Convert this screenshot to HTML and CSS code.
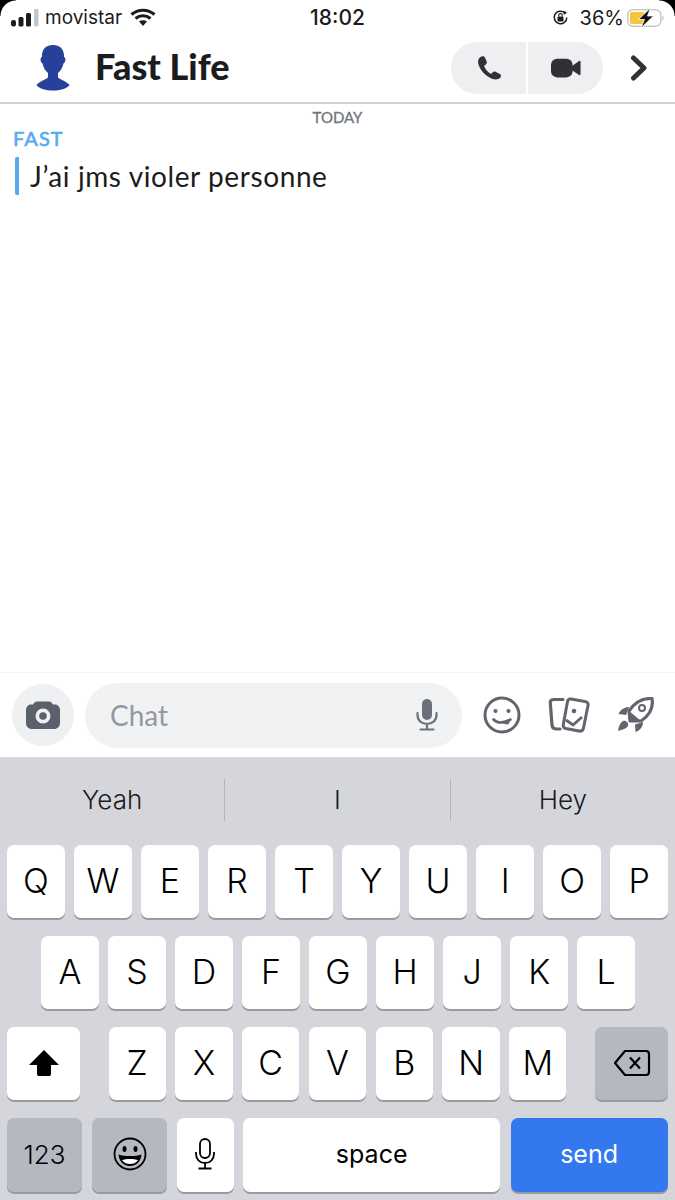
FILE: index.html
```html
<!DOCTYPE html>
<html lang="en">
<head>
    <meta charset="UTF-8">
    <meta name="viewport" content="width=device-width, initial-scale=1.0">
    <title>Fast Life</title>
    <link rel="stylesheet" href="styles.css">
</head>
<body>
    <div class="phone">
        <!-- status bar -->
        <div class="status">
            <div class="status-left">
                <svg class="signal" width="28" height="18" viewBox="0 0 28 18"><rect x="0" y="11" width="5" height="6.500" rx="2.200" fill="#1a1c20"/><rect x="7.500" y="8" width="5" height="9.500" rx="1.500" fill="#1a1c20"/><rect x="15" y="4" width="5" height="13.500" rx="1.500" fill="#1a1c20"/><rect x="23" y="0" width="4.500" height="17.500" rx="1.400" fill="#c5c6c9"/></svg>
                <span class="carrier">movistar</span>
                <svg class="wifi" width="26" height="19" viewBox="0 0 26 19"><path d="M1.500 6.500C8 .8 18 .8 24.500 6.500M5.500 10.500C10 6.800 16 6.800 20.500 10.500" fill="none" stroke="#1a1c20" stroke-width="3.200"/><path d="M9 13.500C11.300 11.800 14.700 11.800 17 13.500L13 18Z" fill="#1a1c20"/></svg>
            </div>
            <div class="status-time">18:02</div>
            <div class="status-right">
                <svg class="lock" width="17" height="17" viewBox="0 0 17 17"><path d="M14.800 8.500A6.300 6.300 0 1 1 12.500 3.600" fill="none" stroke="#1a1c20" stroke-width="1.500"/><path d="M11.500 1.500L15 3.800 11.800 6Z" fill="#1a1c20"/><rect x="5.500" y="7.500" width="6" height="5" rx="1" fill="#1a1c20"/><path d="M6.800 7.500V6.300a1.700 1.700 0 0 1 3.400 0V7.500" fill="none" stroke="#1a1c20" stroke-width="1.100"/></svg>
                <span class="percent">36%</span>
                <svg class="battery" width="38" height="20" viewBox="0 0 38 20"><rect x=".8" y="1.800" width="33" height="16.400" rx="5" fill="none" stroke="#c9c9c9" stroke-width="1.500"/><rect x="3" y="4" width="15" height="12" rx="2" fill="#f5c63c"/><path d="M35.500 7.500c1.500.5 1.500 4.500 0 5z" fill="#bdbdbd"/><path d="M23.500 0L11.500 11.500H17.500L14 20 26.500 8H20.500Z" fill="#111" stroke="#fff" stroke-width=".8"/></svg>
            </div>
        </div>

        <!-- header -->
        <div class="header">
            <svg class="avatar" width="34" height="46" viewBox="0 0 34 46"><path d="M17 0C9 0 5.500 5.500 6 12 4 12.500 4 17 6.500 18.500 7.500 23 9.500 26 12 28V32C12 34 5 35 .5 40 3.500 44 10 45.500 17 45.500S30.500 44 33.500 40C29 35 22 34 22 32V28C24.500 26 26.500 23 27.500 18.500 30 17 30 12.500 28 12 28.500 5.500 25 0 17 0Z" fill="#27409a"/></svg>
            <h1 class="name">Fast Life</h1>
            <div class="call-pill">
                <div class="call-btn">
                    <svg width="28" height="28" viewBox="0 0 28 28"><path d="M5 3.500C3 5 2.500 7.500 3.500 10.500 5.500 16.500 10.500 22 17.500 25 20.500 26 24 25.500 25.500 23.500 26.500 22 26 20.500 24.500 19.800L21 18C19.500 17.300 18.500 17.500 17.500 18.500L16 20C13 18.500 10.500 15.500 9 12L10.800 10.500C11.800 9.500 12 8.500 11.500 7L10 3.800C9 1.800 6.800 2 5 3.500Z" fill="#2f3136"/></svg>
                </div>
                <div class="call-btn">
                    <svg width="30" height="20" viewBox="0 0 32 20"><rect x="0" y="0" width="23" height="20" rx="6.500" fill="#2f3136"/><path d="M22 8L30 2.500C31 2 31.500 2.500 31.500 3.500V16.500C31.500 17.500 31 18 30 17.500L22 12Z" fill="#2f3136"/></svg>
                </div>
            </div>
            <svg class="chevron" width="18" height="26" viewBox="0 0 18 26"><path d="M3.500 3L14 13 3.500 23" fill="none" stroke="#2f3136" stroke-width="5" stroke-linecap="round" stroke-linejoin="round"/></svg>
        </div>

        <!-- messages -->
        <div class="messages">
            <div class="day">TODAY</div>
            <div class="sender">FAST</div>
            <div class="message">J’ai jms violer personne</div>
        </div>

        <!-- chat bar -->
        <div class="chat-bar">
            <div class="camera">
                <svg width="36" height="30" viewBox="0 0 36 30"><path d="M12 1.500H24C26 1.500 27 3 28 4.500H30C33 4.500 35 7 35 10V23C35 26.500 32.500 29 29 29H7C3.500 29 1 26.500 1 23V10C1 7 3 4.500 6 4.500H8C9 3 10 1.500 12 1.500Z" fill="#5b616c"/><circle cx="18" cy="16" r="7.500" fill="#f0f1f3"/><circle cx="18" cy="16" r="3.800" fill="#5b616c"/></svg>
            </div>
            <div class="chat-input">
                <span class="placeholder">Chat</span>
                <svg width="22" height="32" viewBox="0 0 22 32"><rect x="6" y="0" width="10" height="21" rx="5" fill="#6d7079"/><path d="M1.500 14V16C1.500 21.500 5.500 25 11 25S20.500 21.500 20.500 16V14M11 25V30M4.500 30.500H17.500" fill="none" stroke="#6d7079" stroke-width="2.200" stroke-linecap="round"/></svg>
            </div>
            <div class="chat-icons">
                <svg width="38" height="38" viewBox="0 0 38 38"><circle cx="19" cy="19" r="17" fill="none" stroke="#62656e" stroke-width="3"/><circle cx="12.500" cy="15" r="2.100" fill="#62656e"/><circle cx="25.500" cy="15" r="2.100" fill="#62656e"/><path d="M10.500 23.500C14 27 20 27.500 27.500 23.500M22 25.500C22.500 28 25 28 25.500 25" fill="none" stroke="#62656e" stroke-width="2.600" stroke-linecap="round"/></svg>
                <svg width="42" height="36" viewBox="0 0 42 36"><path d="M15 2.500H6C3.500 2.500 2 3.500 2.300 6L4 28C4.300 31 6 32 8.500 32H12" fill="none" stroke="#62656e" stroke-width="3.200" stroke-linecap="round"/><path d="M23 2L37 4.500C39.500 5 40.500 6.500 40 8.500L35.500 31C35 33.500 33.500 34.500 31 34L18 31.500C16 31 15 29.500 15.300 27.500L19.500 4.500C20 2.500 21 1.600 23 2Z" fill="none" stroke="#62656e" stroke-width="3"/><circle cx="26" cy="14" r="2.300" fill="#62656e"/><path d="M18 23L25 28 34 20" fill="none" stroke="#62656e" stroke-width="2.800"/></svg>
                <svg width="38" height="36" viewBox="0 0 38 36"><path d="M12 14C18 5 26 1 35 1.500 36.500 10 33 18 24 24L13 24Z" fill="none" stroke="#62656e" stroke-width="3.200" stroke-linejoin="round"/><circle cx="25" cy="11" r="3" fill="none" stroke="#62656e" stroke-width="2"/><path d="M12 10C8 10 4 12 1.500 17L9 18ZM26 25C26 29 24 33 18.500 35L18 27.500ZM6 24C9 23 12 26 11 29 9 32 4 33 1 34 1.500 31 2.500 26 6 24Z" fill="#62656e"/><path d="M13 24L12 14 24 24Z" fill="#62656e"/></svg>
            </div>
        </div>

        <!-- keyboard -->
        <div class="keyboard">
            <div class="suggestions">
                <div class="suggestion">Yeah</div>
                <div class="suggestion">I</div>
                <div class="suggestion">Hey</div>
            </div>
            <div class="row">
                <div class="key">Q</div><div class="key">W</div><div class="key">E</div><div class="key">R</div><div class="key">T</div><div class="key">Y</div><div class="key">U</div><div class="key">I</div><div class="key">O</div><div class="key">P</div>
            </div>
            <div class="row row-home">
                <div class="key">A</div><div class="key">S</div><div class="key">D</div><div class="key">F</div><div class="key">G</div><div class="key">H</div><div class="key">J</div><div class="key">K</div><div class="key">L</div>
            </div>
            <div class="row row-shift">
                <div class="key key-wide">
                    <svg width="32" height="28" viewBox="0 0 32 28"><path d="M16 1L31 16H23V25C23 26.500 22 27 21 27H11C10 27 9 26.500 9 25V16H1Z" fill="#000"/></svg>
                </div>
                <div class="letters">
                    <div class="key">Z</div><div class="key">X</div><div class="key">C</div><div class="key">V</div><div class="key">B</div><div class="key">N</div><div class="key">M</div>
                </div>
                <div class="key key-wide key-dark">
                    <svg width="38" height="28" viewBox="0 0 38 28"><path d="M12 2H33C35 2 36 3 36 5V23C36 25 35 26 33 26H12L2 14Z" fill="none" stroke="#000" stroke-width="2.200" stroke-linejoin="round"/><path d="M17 8.500L27 19.500M27 8.500L17 19.500" stroke="#000" stroke-width="2.200"/></svg>
                </div>
            </div>
            <div class="row row-bottom">
                <div class="key key-dark key-num">123</div>
                <div class="key key-dark">
                    <svg width="34" height="34" viewBox="0 0 34 34"><circle cx="17" cy="17" r="15.500" fill="none" stroke="#000" stroke-width="1.800"/><ellipse cx="11.500" cy="12" rx="2" ry="3" fill="#000"/><ellipse cx="22.500" cy="12" rx="2" ry="3" fill="#000"/><path d="M5.500 17.500C12 19.500 22 19.500 28.500 17.500 28 24.500 23 29 17 29S6 24.500 5.500 17.500Z" fill="#000"/><path d="M9 23C13 21.500 21 21.500 25 23 23 26 20 27 17 27S11 26 9 23Z" fill="#fff"/></svg>
                </div>
                <div class="key">
                    <svg width="20" height="32" viewBox="0 0 20 32"><rect x="5" y="1" width="10" height="19" rx="5" fill="none" stroke="#000" stroke-width="1.800"/><path d="M1 14V16C1 21.500 5 25 10 25S19 21.500 19 16V14M10 25V30M3.500 30.500H16.500" fill="none" stroke="#000" stroke-width="1.800"/></svg>
                </div>
                <div class="key key-space">space</div>
                <div class="key key-send">send</div>
            </div>
        </div>
    </div>
</body>
</html>
```

FILE: styles.css
```css
* {
    padding: 0;
    margin: 0;
    box-sizing: border-box;
}
body {
    width: 675px;
    height: 1200px;
    overflow: hidden;
    background: #ffffff;
    font-family: "Inter", "Liberation Sans", sans-serif;
    color: #1a1c20;
}
.phone {
    display: flex;
    flex-direction: column;
    height: 1200px;
    position: relative;
}
/* black screen corners */
.phone::before,
.phone::after {
    content: "";
    position: absolute;
    top: 0;
    width: 16px;
    height: 16px;
}
.phone::before {
    left: 0;
    background: radial-gradient(circle at 100% 100%, transparent 15px, #000 16px);
}
.phone::after {
    right: 0;
    background: radial-gradient(circle at 0 100%, transparent 15px, #000 16px);
}

.status {
    height: 34px;
    padding: 1px 10px 0 11px;
    display: flex;
    align-items: center;
    justify-content: space-between;
    position: relative;
    font-size: 19px;
}
.status-left {
    display: flex;
    align-items: center;
    gap: 6px;
}
.status-time {
    position: absolute;
    left: 0;
    right: 0;
    text-align: center;
    font-size: 21px;
    font-weight: 500;
}
.status-right {
    display: flex;
    align-items: center;
    gap: 3px;
}
.lock {
    margin-right: 8px;
}
.percent {
    font-size: 20px;
}
.wifi {
    margin-left: 2px;
}

.header {
    height: 70px;
    padding: 0 27px 0 36px;
    display: flex;
    align-items: center;
    border-bottom: 2px solid #cfd0d3;
}
.name {
    font-family: "Lato", "Liberation Sans", sans-serif;
    font-size: 36px;
    font-weight: 900;
    line-height: 40px;
    margin: -4px 0 0 25px;
    flex: 1;
}
.call-pill {
    width: 152px;
    height: 52px;
    margin: -1px 27px 0 0;
    border-radius: 26px;
    background: #eeeff0;
    display: flex;
    overflow: hidden;
}
.call-btn {
    flex: 1;
    display: flex;
    align-items: center;
    justify-content: center;
}
.call-btn + .call-btn {
    border-left: 2px solid #ffffff;
}

.messages {
    flex: 1;
    padding-top: 4px;
    border-bottom: 1px solid #f4f4f5;
    font-family: "Lato", "Liberation Sans", sans-serif;
}
.day {
    text-align: center;
    font-size: 15px;
    font-weight: 400;
    -webkit-text-stroke: .3px #70747c;
    color: #70747c;
    line-height: 18px;
}
.sender {
    margin: 1px 0 0 13px;
    font-size: 20px;
    font-weight: 400;
    -webkit-text-stroke: .6px #56aaf0;
    letter-spacing: 1.100px;
    line-height: 22px;
    color: #56aaf0;
}
.message {
    margin: 8px 0 0 15px;
    padding-left: 11px;
    border-left: 4px solid #56aaf0;
    border-radius: 2px;
    font-size: 28px;
    line-height: 38px;
    letter-spacing: .6px;
}

.chat-bar {
    height: 84px;
    padding: 0 12px;
    display: flex;
    align-items: center;
}
.camera {
    width: 62px;
    height: 62px;
    border-radius: 50%;
    background: #eef0f1;
    display: flex;
    align-items: center;
    justify-content: center;
}
.chat-input {
    width: 377px;
    height: 65px;
    margin-left: 11px;
    padding: 0 24px 0 25px;
    border-radius: 33px;
    background: #f1f2f3;
    display: flex;
    align-items: center;
    justify-content: space-between;
}
.placeholder {
    font-family: "Lato", "Liberation Sans", sans-serif;
    font-size: 28px;
    color: #95989e;
}
.chat-icons {
    flex: 1;
    display: flex;
    align-items: center;
    justify-content: space-between;
    padding: 0 8px 0 21px;
}

.keyboard {
    height: 443px;
    background: #d5d6dc;
    display: flex;
    flex-direction: column;
}
.suggestions {
    height: 88px;
    padding-bottom: 2px;
    display: flex;
    align-items: center;
}
.suggestion {
    flex: 1;
    height: 42px;
    line-height: 42px;
    text-align: center;
    font-size: 26px;
    font-weight: 350;
    color: #1b1b1d;
}
.suggestion + .suggestion {
    border-left: 1px solid #b4b5bb;
}
.row {
    height: 73px;
    margin-bottom: 18px;
    padding: 0 7px;
    display: flex;
    gap: 9.400px;
}
.row-home {
    padding: 0 40px 0 41px;
}
.row-shift {
    justify-content: space-between;
}
.letters {
    width: 458px;
    display: flex;
    gap: 9.500px;
}
.row-bottom {
    height: 74px;
    margin-bottom: 0;
}
.key {
    flex: 1;
    padding-bottom: 2px;
    display: flex;
    align-items: center;
    justify-content: center;
    background: #ffffff;
    border-radius: 7px;
    box-shadow: 0 2px 0 #9a9ba0;
    font-size: 34px;
    font-weight: 350;
    color: #000000;
}
.key-wide {
    flex: 0 0 73px;
}
.key-dark {
    background: #b5b8c1;
}
.row-bottom .key-dark {
    flex: 0 0 75px;
}
.row-bottom .key-dark + .key-dark {
    margin-left: 1px;
}
.row-bottom .key:nth-child(3) {
    flex: 0 0 57px;
}
.key-num {
    font-size: 26px;
}
.key-space {
    flex: 0 0 257px;
    font-size: 25px;
    font-weight: 400;
}
.key-send {
    flex: 0 0 157px;
    margin-left: 1px;
    background: #3478f0;
    color: #ffffff;
    font-size: 25px;
    font-weight: 400;
}
```
